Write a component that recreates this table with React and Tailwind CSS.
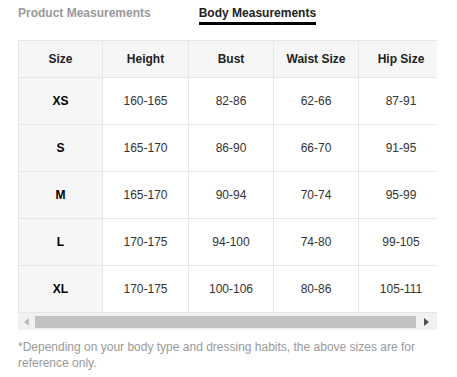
import React from 'react';

const rows = [
  ['XS', '160-165', '82-86', '62-66', '87-91'],
  ['S', '165-170', '86-90', '66-70', '91-95'],
  ['M', '165-170', '90-94', '70-74', '95-99'],
  ['L', '170-175', '94-100', '74-80', '99-105'],
  ['XL', '170-175', '100-106', '80-86', '105-111'],
];

const headers = ['Size', 'Height', 'Bust', 'Waist Size', 'Hip Size'];
const widths = ['w-[84px]', 'w-[86px]', 'w-[85px]', 'w-[85px]', 'w-[85px]'];

export default function App() {
  return (
    <div className="w-[457px] h-[377px] bg-white font-['Liberation_Sans',Arial,sans-serif] px-[18px] pt-[5px]">
      {/* TABS */}
      <div className="flex items-start text-[12px] font-bold h-[20px]">
        <span className="text-[#999] pt-[1px] leading-[15px]">Product Measurements</span>
        <span className="ml-[48px] text-[#222] pt-[1px] leading-[15px] pb-[1px] border-b-[3px] border-black">
          Body Measurements
        </span>
      </div>

      {/* TABLE */}
      <div className="mt-[15px] w-[419px] overflow-hidden">
        <table className="border-collapse table-fixed w-[425px] text-[12px]">
          <thead>
            <tr className="h-[37px] bg-[#f6f6f6]">
              {headers.map((h, i) => (
                <th key={h} className={`${widths[i]} font-bold text-[#222] border border-[#e6e6e6] p-0`}>
                  {h}
                </th>
              ))}
            </tr>
          </thead>
          <tbody>
            {rows.map((r) => (
              <tr key={r[0]} className="h-[47px]">
                {r.map((c, i) => (
                  <td
                    key={i}
                    className={`text-center p-0 border border-[#e6e6e6] ${
                      i === 0 ? 'bg-[#f6f6f6] font-bold text-black' : 'bg-white text-[#333]'
                    }`}
                  >
                    {c}
                  </td>
                ))}
              </tr>
            ))}
          </tbody>
        </table>

        {/* SCROLLBAR */}
        <div className="h-[17px] bg-[#f1f1f1] flex items-center">
          <div className="w-[17px] flex justify-center">
            <svg width="5" height="8" viewBox="0 0 5 8"><path d="M5 0 L0 4 L5 8 Z" fill="#bdbdbd" /></svg>
          </div>
          <div className="w-[381px] h-[12px] bg-[#c1c1c1]"></div>
          <div className="flex-1 flex justify-center">
            <svg width="5" height="8" viewBox="0 0 5 8"><path d="M0 0 L5 4 L0 8 Z" fill="#505050" /></svg>
          </div>
        </div>
      </div>

      {/* NOTE */}
      <p className="mt-[9px] text-[12px] leading-[16px] text-[#999] pr-[4px]">
        *Depending on your body type and dressing habits, the above sizes are for reference only.
      </p>
    </div>
  );
}
